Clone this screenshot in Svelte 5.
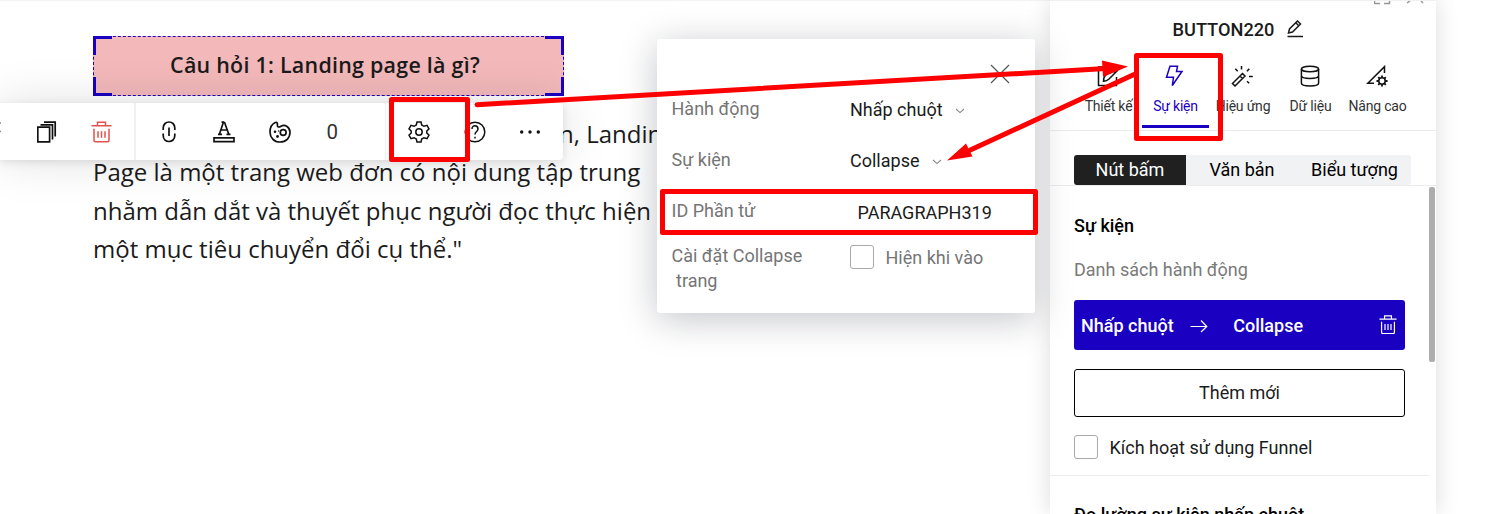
<script>
  const tabs = [
    { id: 'design', label: 'Thiết kế', width: 67 },
    { id: 'event', label: 'Sự kiện', width: 67 },
    { id: 'effect', label: 'Hiệu ứng', width: 68 },
    { id: 'data', label: 'Dữ liệu', width: 67 },
    { id: 'advanced', label: 'Nâng cao', width: 67 }
  ];
  const active = 'event';
  const lines = [
    'n, Landing',
    'Page là một trang web đơn có nội dung tập trung',
    'nhằm dẫn dắt và thuyết phục người đọc thực hiện',
    'một mục tiêu chuyển đổi cụ thể."'
  ];
</script>

{#snippet trash()}
  <path d="M0.5 4.5H20.5M6.5 4V1H14.5V4M3 7.5V19Q3 20.5 4.5 20.5H16.5Q18 20.5 18 19V7.5M7 10V16.5M10.5 10V16.5M14 10V16.5" />
{/snippet}

{#snippet chevron()}
  <svg class="chevron" width="10" height="6" viewBox="0 0 10 6"><path d="M1 1L5 4.6L9 1" /></svg>
{/snippet}

<div class="app">
  <main class="canvas">
    <div class="cta">
      <i class="corner tl"></i><i class="corner tr"></i><i class="corner bl"></i><i class="corner br"></i>
      <span>Câu hỏi 1: Landing page là gì?</span>
    </div>
    <div class="paragraph">
      {#each lines as line, i}
        <div class:continued={i === 0}>{line}</div>
      {/each}
    </div>
  </main>

  <aside class="panel">
    <header>
      <svg class="winicons" width="52" height="4" viewBox="0 0 52 4"><path d="M0.5 0V2.5H6M10 2.5H15.5V0M33 2L36 0M47 0L49 2" /></svg>
      <div class="title">
        <span>BUTTON220</span>
        <svg width="17" height="18" viewBox="0 0 17 18"><path d="M0.5 16.5H16M1.5 13L2.5 9L10.5 1L13.5 4L5.5 12L1.5 13ZM8.8 2.8L11.7 5.7" /></svg>
      </div>
      <nav>
        {#each tabs as tab}
          <div class="tab" class:active={tab.id === active} style="width:{tab.width}px">
            <svg width="22" height="22" viewBox="0 0 22 22">
              {#if tab.id === 'design'}
                <path d="M13 2H1.5V20.5H19.5V12M6.5 16.2C6.3 13.5 7 12 8.5 10.3L17 2L20.5 5.5L12 14C10.3 15.6 9 16.3 6.5 16.2ZM14.8 4.2L18.2 7.8" />
              {:else if tab.id === 'event'}
                <path d="M6 1.3H13.5L12.5 6.5H18L8.3 20.5L9.5 12.3H2.5L6 1.3Z" />
              {:else if tab.id === 'effect'}
                <path d="M1.5 18.5L11.5 8.5L14 11L4 21L1.5 18.5ZM9 11L11.5 13.5M10.5 1V4.5M4.3 3.7L6.7 6.3M18.3 3.7L16 6.2M18 11.5H21.8M16 16.2L18.2 18.3" />
              {:else if tab.id === 'data'}
                <ellipse cx="11" cy="4" rx="8.6" ry="2.8" />
                <path d="M2.4 4V18C2.4 22 19.6 22 19.6 18V4M2.4 10.5C2.4 14.5 19.6 14.5 19.6 10.5" />
              {:else}
                <path d="M18.5 8V1.6L1.8 18.2H8" />
                <circle cx="16" cy="16" r="3.2" />
                <path d="M16 10.5V12.8M16 19.2V21.5M10.5 16H12.8M19.2 16H21.5M12.2 12.2L13.7 13.7M18.3 18.3L19.8 19.8M12.2 19.8L13.7 18.3M18.3 13.7L19.8 12.2" stroke-width="1.8" />
              {/if}
            </svg>
            <span>{tab.label}</span>
          </div>
        {/each}
      </nav>
    </header>
    <div class="segwrap">
      <div class="segments">
        <span class="on">Nút bấm</span><span>Văn bản</span><span>Biểu tượng</span>
      </div>
    </div>
    <section>
      <h3>Sự kiện</h3>
      <div class="sub">Danh sách hành động</div>
      <div class="event">
        <span class="trigger">Nhấp chuột</span>
        <svg width="18" height="14" viewBox="0 0 18 14"><path d="M0.5 7.5H16.5M11 1.5L16.8 7.5L11 13" /></svg>
        <span class="action">Collapse</span>
        <svg class="bin" width="18" height="19" viewBox="0 0 21 21" preserveAspectRatio="none">{@render trash()}</svg>
      </div>
      <div class="add">Thêm mới</div>
      <div class="check"><i class="box"></i><span>Kích hoạt sử dụng Funnel</span></div>
    </section>
    <section class="next"><h3>Đo lường sự kiện nhấp chuột</h3></section>
    <i class="scroll"></i>
  </aside>

  <div class="toolbar">
    <div class="group first">
      <svg class="cut" width="2" height="22" viewBox="0 0 2 22"><path d="M0 2H1M0 10.5H1" /></svg>
      <svg class="copy" width="20" height="22" viewBox="0 0 20 22"><path d="M0.8 6.2H12.6V20.8H0.8ZM3.5 3.8H15.5V18.5M7 1.2H18.2V15.5" /></svg>
      <svg class="del" width="21" height="22" viewBox="0 0 21 21.5">{@render trash()}</svg>
    </div>
    <div class="group second">
      <svg class="link" width="14" height="22" viewBox="0 0 14 22"><path d="M1.2 9V7C1.2 -1 12.8 -1 12.8 7V9M1.2 12.5V14.5C1.2 22.5 12.8 22.5 12.8 14.5V12.5M7 6.5V15" /></svg>
      <svg class="letter" width="22" height="22" viewBox="0 0 22 22"><path d="M1 16.8H21V20.7H1ZM5 13.3H9M13.5 13.3H17.5M6.5 13L10.3 1.5H11.6L15.7 13M8 9H14.2M8.5 1.2H11" /></svg>
      <svg class="palette" width="22" height="22" viewBox="0 0 22 22"><path d="M6.3 1.5C8.2 0.8 8.6 2.3 8.4 4C8.2 6.2 9.8 6.6 12 5.2C16 3 21 6 21 11.3C21 17 17 21 11 21C5 21 1 16.5 1 11C1 6.5 3 3 6.3 1.5Z" /><circle cx="14.2" cy="11.5" r="2.9" /><g class="ink"><circle cx="6" cy="10.8" r="1.3" /><circle cx="9.5" cy="10" r=".7" /><circle cx="8.5" cy="15.5" r="1.4" /></g></svg>
      <span>0</span>
    </div>
    <div class="group third">
      <svg class="gear" width="22" height="22" viewBox="0 0 22 22"><path d="M9 1H13L13.7 4L16 5.3L19 4.4L21 7.8L18.8 10V12L21 14.2L19 17.6L16 16.7L13.7 18L13 21H9L8.3 18L6 16.7L3 17.6L1 14.2L3.2 12V10L1 7.8L3 4.4L6 5.3L8.3 4Z" /><circle cx="11" cy="11" r="3.2" /></svg>
      <svg class="help" width="22" height="22" viewBox="0 0 22 22"><circle cx="11" cy="11" r="9.8" /><path d="M8 8C8 3.5 14 3.8 14 8C14 10.5 11 10.5 11 13.5M11 15.7V17.5" /></svg>
      <svg class="dots" width="22" height="22" viewBox="0 0 22 22"><g class="ink"><circle cx="2.7" cy="11" r="1.7" /><circle cx="11" cy="11" r="1.7" /><circle cx="19.3" cy="11" r="1.7" /></g></svg>
    </div>
  </div>

  <div class="popup">
    <div class="close"><svg width="20" height="20" viewBox="0 0 20 20"><path d="M1 1L19 19M19 1L1 19" /></svg></div>
    <div class="row"><label>Hành động</label><span class="val">Nhấp chuột {@render chevron()}</span></div>
    <div class="row"><label>Sự kiện</label><span class="val">Collapse {@render chevron()}</span></div>
    <div class="row id"><label>ID Phần tử</label><span class="val">PARAGRAPH319</span></div>
    <div class="row last">
      <label>Cài đặt Collapse<br /><em>trang</em></label>
      <span class="val check"><i class="box"></i><span>Hiện khi vào</span></span>
    </div>
  </div>

  <svg class="marks" width="1509" height="514" viewBox="0 0 1509 514">
    <g class="frames">
      <rect x="391.5" y="99.5" width="76" height="60" />
      <rect x="662.5" y="191.5" width="373" height="41" />
      <rect x="1136.5" y="55.5" width="84" height="83" />
    </g>
    <path class="line" d="M477 104.7L1106 68.5M1134 74.5L966 152" />
    <path class="tip" d="M1102 60.5L1128 66.5L1103 77ZM947 160.5L966 143.5L972.5 156.5Z" />
  </svg>
</div>

<style>
  :global(body) { background: #fff; }
  * { box-sizing: border-box; }
  .app { position: relative; width: 1509px; height: 514px; overflow: hidden; display: grid; grid-template-columns: 1050px 386px 1fr; background: #fff; font-family: Roboto, sans-serif; font-size: 18px; color: #1b1b1b; }
  svg { display: block; fill: none; stroke: currentColor; stroke-width: 1.5; flex: none; }
  .canvas { border-top: 1px solid #f3f3f3; padding: 35px 0 0 93px; font-family: "Open Sans", sans-serif; overflow: hidden; }
  .cta { position: relative; width: 471px; height: 60px; border: 1px dashed #1a00c0; background: #f2b8ba; display: flex; align-items: center; justify-content: center; font-size: 21.4px; letter-spacing: .27px; font-weight: 600; padding: 0 7px 3px 0; }
  .corner { position: absolute; width: 19px; height: 19px; border: 0 solid #1a00c0; }
  .tl { left: -1px; top: -1px; border-width: 3px 0 0 3px; }
  .tr { right: -1px; top: -1px; border-width: 3px 3px 0 0; }
  .bl { left: -1px; bottom: -1px; border-width: 0 0 3px 3px; }
  .br { right: -1px; bottom: -1px; border-width: 0 3px 3px 0; }
  .paragraph { margin-top: 19px; font-size: 24px; line-height: 38.4px; white-space: nowrap; color: #1b1b1b; }
  .continued { padding-left: 466px; }
  .panel { position: relative; background: #fff; border-top: 1px solid #f0f0f0; box-shadow: 0 0 22px rgba(0,0,0,.14); height: 514px; }
  header { height: 130px; border-bottom: 1px solid #ececec; }
  .winicons { margin-left: 324px; color: #999; height: 4px; }
  .title { display: flex; align-items: center; gap: 13px; height: 24px; margin-top: 12px; padding-left: 122.5px; font-size: 18.2px; font-weight: 500; }
  nav { display: flex; padding: 23px 0 0 25px; }
  .tab { height: 64px; display: flex; flex-direction: column; align-items: center; font-size: 14px; letter-spacing: -.2px; white-space: nowrap; color: #333; }
  .tab svg { color: #111; margin: 1px 2px 0 0; }
  .tab span { line-height: 18px; margin-top: 10px; }
  .tab.active, .tab.active svg { color: #1a00c0; }
  .tab.active { border-bottom: 3px solid #1a00c0; }
  .segwrap { padding: 24px 25px 0 24px; border-bottom: 1px solid #ececec; height: 55px; }
  .segments { height: 30px; display: grid; grid-template-columns: 112px 112px 113px; background: #f1f2f4; border-radius: 3px; overflow: hidden; line-height: 30px; text-align: center; color: #000; }
  .on { background: #202020; color: #fff; }
  section { padding: 28px 31px 0 24px; height: 290px; width: 379px; border-bottom: 1px solid #ececec; }
  h3 { margin: 0; font-size: 18px; line-height: 24px; font-weight: 500; color: #000; white-space: nowrap; }
  .sub { margin-top: 20px; line-height: 24px; color: #7a7a7a; }
  .event { margin: 18px -1px 0 0; width: 331px; height: 50px; background: #1a00c0; border-radius: 3px; display: flex; align-items: center; padding: 0 8px 0 7px; color: #fff; font-weight: 500; }
  .event svg { margin: 2px 0 0 16px; stroke-width: 1.2; }
  .action { margin-left: 25.5px; }
  .event .bin { margin: -2px 0 0 auto; stroke-width: 1.4; }
  .add { width: 331px; height: 48px; margin-top: 19px; border: 1px solid #000; border-radius: 3px; line-height: 46px; text-align: center; }
  .check { display: flex; align-items: center; gap: 11.5px; }
  .add + .check { margin-top: 18px; }
  .box { width: 24px; height: 24px; border: 1px solid #a9a9a9; border-radius: 3px; background: #fff; }
  section.next { height: 38px; overflow: hidden; border: 0; padding-top: 27px; }
  .scroll { position: absolute; left: 379px; top: 186px; width: 6px; height: 175px; background: #adadad; border-radius: 2px; }

  .toolbar { position: absolute; left: 0; top: 103px; width: 563px; height: 57px; background: #fff; border-radius: 0 4px 4px 0; display: flex; box-shadow: 0 0 48px rgba(0,0,0,.13), 0 2px 8px rgba(0,0,0,.1); color: #111; }
  .group { display: flex; align-items: center; }
  .group svg { margin-top: 1px; }
  .first { width: 136px; border-right: 2px solid #f0f0f0; }
  .cut { color: #888; }
  .first .copy { margin-left: 35px; stroke-width: 1.7; }
  .first .del { margin-left: 34px; color: #e0524c; }
  .second { width: 250px; border-right: 1px solid #ececec; padding-left: 26px; }
  .link, .letter, .palette { stroke-width: 1.7; }
  .second .letter { margin-left: 37px; }
  .second .palette { margin-left: 34px; }
  .second span { margin-left: 35.5px; font-size: 20.5px; color: #333; }
  .third { padding-left: 22px; }
  .third .help { margin-left: 34px; }
  .third .dots { margin-left: 33px; }
  .ink { fill: currentColor; stroke: none; }

  .popup { position: absolute; left: 657px; top: 39px; width: 378px; height: 274px; background: #fff; border-radius: 3px; padding: 25px 25px 0 14.5px; box-shadow: 0 6px 36px rgba(20,25,45,.25); }
  .close { display: flex; justify-content: flex-end; height: 32px; color: #555; }
  .close svg { stroke-width: 1.2; }
  .row { display: grid; grid-template-columns: 178.5px 1fr; height: 51px; line-height: 26px; color: #757575; }
  .val { display: flex; align-items: center; gap: 12.5px; height: 26px; color: #1b1b1b; margin-top: 1px; white-space: nowrap; }
  .chevron { color: #888; stroke-width: 1.1; margin-top: 1px; }
  .id .val { padding-left: 7.5px; margin-top: 2px; }
  .last { line-height: 25px; margin-top: -6px; }
  .last .val { color: #757575; gap: 11.5px; }
  em { font-style: normal; margin-left: 4.5px; }
  .marks { position: absolute; left: 0; top: 0; color: #f00; }
  .frames { stroke-width: 5; stroke-linejoin: round; }
  .line { stroke-width: 5; stroke-linecap: round; }
  .tip { fill: #f00; stroke: none; }
</style>
